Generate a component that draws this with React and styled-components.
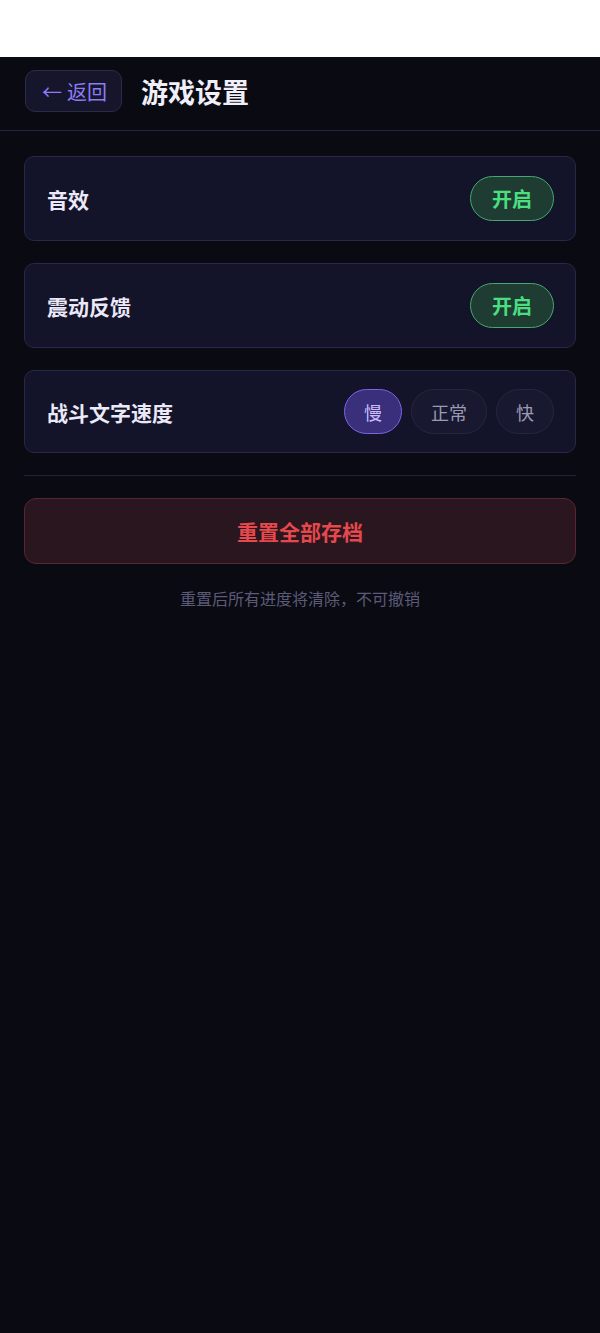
import React, { useState } from "react";
import styled, { createGlobalStyle } from "styled-components";

const Global = createGlobalStyle`
  html, body { margin: 0; padding: 0; background: #ffffff; }
  body { font-family: "Noto Sans CJK SC", "Noto Sans", sans-serif; }
  * { box-sizing: border-box; }
`;

const TopSpace = styled.div`
  height: 57px;
  background: #ffffff;
`;

const Screen = styled.div`
  min-height: 1276px;
  background: #0a0a13;
  display: flex;
  flex-direction: column;
`;

const Header = styled.header`
  display: flex;
  align-items: center;
  gap: 19px;
  padding: 13px 25px 18px;
  border-bottom: 1px solid #24243a;
`;

const BackButton = styled.button`
  height: 42px;
  width: 97px;
  border-radius: 10px;
  background: #15152c;
  border: 1px solid #2b2b47;
  color: #8d7cf2;
  font-family: inherit;
  font-size: 20px;
  display: flex;
  align-items: center;
  justify-content: center;
  gap: 5px;
  padding: 0 0 0 2px;
  cursor: pointer;
`;

const Title = styled.h1`
  margin: 0;
  font-size: 27px;
  font-weight: 700;
  color: #f0eef8;
`;

const Content = styled.main`
  padding: 25px 24px;
  display: flex;
  flex-direction: column;
  gap: 22px;
`;

const Card = styled.div`
  display: flex;
  align-items: center;
  justify-content: space-between;
  padding: ${(p) => (p.$tight ? "18px 21px 18px 22px" : "19px 21px 19px 22px")};
  background: #13132a;
  border: 1px solid #28284a;
  border-radius: 10px;
`;

const Label = styled.span`
  font-size: 21px;
  font-weight: 700;
  color: #ebe9f7;
`;

const Toggle = styled.button`
  width: 84px;
  height: 45px;
  border-radius: 23px;
  background: ${(p) => (p.$on ? "#1e3c32" : "#1a1a30")};
  border: 1.5px solid ${(p) => (p.$on ? "#44a870" : "#2e2e4a")};
  color: ${(p) => (p.$on ? "#4ade80" : "#8b8aa6")};
  font-family: inherit;
  font-size: 20px;
  font-weight: 700;
  padding: 0;
  cursor: pointer;
`;

const SpeedGroup = styled.div`
  display: flex;
  gap: 9px;
`;

const SpeedButton = styled.button`
  height: 45px;
  min-width: 57px;
  padding: 0 19px;
  border-radius: 23px;
  background: ${(p) => (p.$active ? "#3a2f7a" : "#181830")};
  border: 1.5px solid ${(p) => (p.$active ? "#7b63e8" : "#26263f")};
  color: ${(p) => (p.$active ? "#c9bdfc" : "#9b9ab4")};
  font-family: inherit;
  font-size: 18px;
  cursor: pointer;
`;

const Divider = styled.hr`
  margin: 0;
  border: none;
  border-top: 1px solid #22223a;
`;

const ResetButton = styled.button`
  height: 66px;
  border-radius: 12px;
  background: #2a161e;
  border: 1px solid #5a2531;
  color: #e5484d;
  font-family: inherit;
  font-size: 21px;
  font-weight: 700;
  cursor: pointer;
`;

const Note = styled.p`
  margin: 0;
  text-align: center;
  font-size: 16px;
  color: #5c5b78;
`;

export default function App() {
  const [sound, setSound] = useState(true);
  const [vibrate, setVibrate] = useState(true);
  const [speed, setSpeed] = useState("慢");

  return (
    <>
      <Global />
      <TopSpace />
      <Screen>
        <Header>
          <BackButton>
            <span>←</span>
            <span>返回</span>
          </BackButton>
          <Title>游戏设置</Title>
        </Header>
        <Content>
          <Card>
            <Label>音效</Label>
            <Toggle $on={sound} onClick={() => setSound(!sound)}>
              {sound ? "开启" : "关闭"}
            </Toggle>
          </Card>
          <Card>
            <Label>震动反馈</Label>
            <Toggle $on={vibrate} onClick={() => setVibrate(!vibrate)}>
              {vibrate ? "开启" : "关闭"}
            </Toggle>
          </Card>
          <Card $tight>
            <Label>战斗文字速度</Label>
            <SpeedGroup>
              {["慢", "正常", "快"].map((s) => (
                <SpeedButton key={s} $active={speed === s} onClick={() => setSpeed(s)}>
                  {s}
                </SpeedButton>
              ))}
            </SpeedGroup>
          </Card>
          <Divider />
          <ResetButton>重置全部存档</ResetButton>
          <Note>重置后所有进度将清除，不可撤销</Note>
        </Content>
      </Screen>
    </>
  );
}
